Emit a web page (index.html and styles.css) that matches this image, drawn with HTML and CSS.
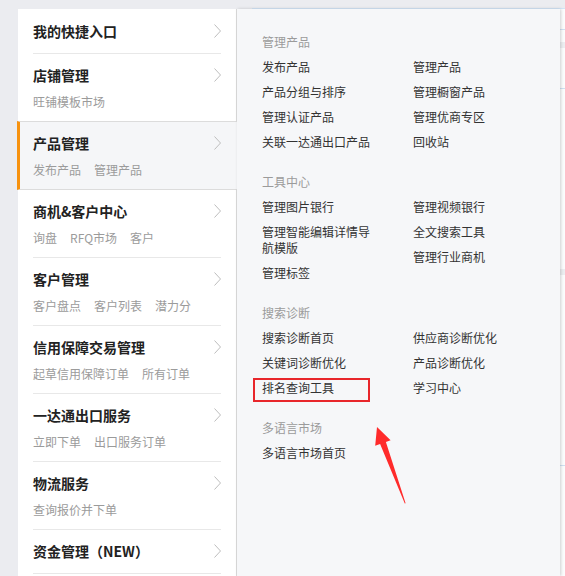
FILE: index.html
```html
<!DOCTYPE html>
<html lang="zh-CN">
<head>
<meta charset="utf-8">
<title>产品管理菜单</title>
<link rel="stylesheet" href="styles.css">
</head>
<body>
<div class="topbar"><div class="topline"></div></div>
<div class="main">
  <nav class="menu">
    <div class="item nosub">
      <div class="inner">
        <div class="title-row"><span class="title">我的快捷入口</span><svg class="chev" width="7" height="14" viewBox="0 0 7 14"><polyline points="0.5,0.5 6.5,7 0.5,13.5" fill="none" stroke="#bdbdbd" stroke-width="1"/></svg></div>
      </div>
    </div>
    <div class="item">
      <div class="inner">
        <div class="title-row"><span class="title">店铺管理</span><svg class="chev" width="7" height="14" viewBox="0 0 7 14"><polyline points="0.5,0.5 6.5,7 0.5,13.5" fill="none" stroke="#bdbdbd" stroke-width="1"/></svg></div>
        <div class="subs"><span>旺铺模板市场</span></div>
      </div>
    </div>
    <div class="item active">
      <div class="inner">
        <div class="title-row"><span class="title">产品管理</span><svg class="chev" width="7" height="14" viewBox="0 0 7 14"><polyline points="0.5,0.5 6.5,7 0.5,13.5" fill="none" stroke="#bdbdbd" stroke-width="1"/></svg></div>
        <div class="subs"><span>发布产品</span><span>管理产品</span></div>
      </div>
    </div>
    <div class="item">
      <div class="inner">
        <div class="title-row"><span class="title">商机&amp;客户中心</span><svg class="chev" width="7" height="14" viewBox="0 0 7 14"><polyline points="0.5,0.5 6.5,7 0.5,13.5" fill="none" stroke="#bdbdbd" stroke-width="1"/></svg></div>
        <div class="subs"><span>询盘</span><span>RFQ市场</span><span>客户</span></div>
      </div>
    </div>
    <div class="item">
      <div class="inner">
        <div class="title-row"><span class="title">客户管理</span><svg class="chev" width="7" height="14" viewBox="0 0 7 14"><polyline points="0.5,0.5 6.5,7 0.5,13.5" fill="none" stroke="#bdbdbd" stroke-width="1"/></svg></div>
        <div class="subs"><span>客户盘点</span><span>客户列表</span><span>潜力分</span></div>
      </div>
    </div>
    <div class="item">
      <div class="inner">
        <div class="title-row"><span class="title">信用保障交易管理</span><svg class="chev" width="7" height="14" viewBox="0 0 7 14"><polyline points="0.5,0.5 6.5,7 0.5,13.5" fill="none" stroke="#bdbdbd" stroke-width="1"/></svg></div>
        <div class="subs"><span>起草信用保障订单</span><span>所有订单</span></div>
      </div>
    </div>
    <div class="item">
      <div class="inner">
        <div class="title-row"><span class="title">一达通出口服务</span><svg class="chev" width="7" height="14" viewBox="0 0 7 14"><polyline points="0.5,0.5 6.5,7 0.5,13.5" fill="none" stroke="#bdbdbd" stroke-width="1"/></svg></div>
        <div class="subs"><span>立即下单</span><span>出口服务订单</span></div>
      </div>
    </div>
    <div class="item">
      <div class="inner">
        <div class="title-row"><span class="title">物流服务</span><svg class="chev" width="7" height="14" viewBox="0 0 7 14"><polyline points="0.5,0.5 6.5,7 0.5,13.5" fill="none" stroke="#bdbdbd" stroke-width="1"/></svg></div>
        <div class="subs"><span>查询报价并下单</span></div>
      </div>
    </div>
    <div class="item nosub last">
      <div class="inner">
        <div class="title-row"><span class="title">资金管理（NEW）</span><svg class="chev" width="7" height="14" viewBox="0 0 7 14"><polyline points="0.5,0.5 6.5,7 0.5,13.5" fill="none" stroke="#bdbdbd" stroke-width="1"/></svg></div>
      </div>
    </div>
  </nav>

  <section class="flyout">
    <div class="group">
      <div class="heading">管理产品</div>
      <div class="cols">
        <div class="col"><a>发布产品</a><a>产品分组与排序</a><a>管理认证产品</a><a>关联一达通出口产品</a></div>
        <div class="col"><a>管理产品</a><a>管理橱窗产品</a><a>管理优商专区</a><a>回收站</a></div>
      </div>
    </div>
    <div class="group">
      <div class="heading">工具中心</div>
      <div class="cols">
        <div class="col"><a>管理图片银行</a><a>管理智能编辑详情导航模版</a><a>管理标签</a></div>
        <div class="col"><a>管理视频银行</a><a>全文搜索工具</a><a>管理行业商机</a></div>
      </div>
    </div>
    <div class="group">
      <div class="heading">搜索诊断</div>
      <div class="cols">
        <div class="col"><a>搜索诊断首页</a><a>关键词诊断优化</a><a>排名查询工具</a></div>
        <div class="col"><a>供应商诊断优化</a><a>产品诊断优化</a><a>学习中心</a></div>
      </div>
    </div>
    <div class="group">
      <div class="heading">多语言市场</div>
      <div class="cols">
        <div class="col"><a>多语言市场首页</a></div>
        <div class="col"></div>
      </div>
    </div>

    <div class="mark-box"></div>
    <svg class="mark-arrow" width="40" height="90" viewBox="0 0 40 90">
      <polygon points="7,7 20.6,20.2 15.9,22 35.6,83.2 34.8,83.6 10.1,24 5.2,25.8" fill="#ff2b2b"/>
    </svg>
  </section>

  <div class="behind">
    <div class="b-line b1"></div>
    <div class="b-gray b2"></div>
    <div class="b-line b3"></div>
    <div class="b-gray b4"></div>
    <div class="b-line b5"></div>
  </div>
</div>
</body>
</html>
```

FILE: styles.css
```css
html, body {
  margin: 0;
  padding: 0;
}
body {
  width: 565px;
  height: 576px;
  overflow: hidden;
  background: #ebecf0;
  font-family: "Noto Sans CJK SC", "Noto Sans", sans-serif;
  color: #333;
}
.topbar {
  height: 9px;
  padding-top: 8px;
  padding-left: 252px;
  box-sizing: border-box;
}
.topline {
  height: 1px;
  background: #d3e5f7;
}
.main {
  display: flex;
  height: 567px;
}

/* left menu */
.menu {
  margin-left: 18px;
  width: 218px;
  background: #fff;
  border-right: 1px solid #dcdcdc;
  flex: none;
}
.item {
  padding: 0 15px;
}
.item .inner {
  border-bottom: 1px solid #e8e8e8;
  padding: 12px 0 12px;
}
.item.nosub .inner {
  padding-bottom: 13px;
}
.item:first-child .inner {
  padding-top: 13px;
}
.title-row {
  display: flex;
  justify-content: space-between;
  align-items: center;
  height: 18px;
}
.title {
  font-size: 14px;
  font-weight: 700;
  line-height: 18px;
  color: #222;
}
.chev {
  display: block;
}
.subs {
  display: flex;
  gap: 13px;
  margin-top: 10px;
  font-size: 12px;
  line-height: 15px;
  color: #9b9b9b;
}
.item.active {
  margin: -1px -1px 0 -1px;
  padding: 0 16px 0 13px;
  background: #f5f6f8;
  border-left: 3px solid #f7920f;
  border-top: 1px solid #dcdcdc;
  border-bottom: 1px solid #dcdcdc;
  position: relative;
}
.item.active .inner {
  border-bottom: none;
}
.item.last .inner {
  padding-top: 12px;
}

/* flyout */
.flyout {
  position: relative;
  width: 298px;
  padding: 25px 0 0 25px;
  background: #f6f7f9;
  box-shadow: 1px 0 3px rgba(0, 0, 0, 0.18);
  flex: none;
  font-size: 12px;
  z-index: 2;
}
.group {
  margin-bottom: 15px;
}
.heading {
  line-height: 16px;
  margin-bottom: 9px;
  color: #9b9b9b;
}
.cols {
  display: grid;
  grid-template-columns: 151px 1fr;
}
.col {
  display: flex;
  flex-direction: column;
  align-items: flex-start;
}
.col a {
  display: block;
  max-width: 112px;
  line-height: 16px;
  margin-bottom: 9px;
  color: #333;
}
.mark-box {
  position: absolute;
  left: 16px;
  top: 369px;
  width: 117px;
  height: 24px;
  box-sizing: border-box;
  border: 2px solid #e8262b;
}
.mark-arrow {
  position: absolute;
  left: 133px;
  top: 411px;
}

/* page content behind the flyout */
.behind {
  flex: 1;
  background: #fbfcfd;
  display: flex;
  flex-direction: column;
}
.b-line {
  height: 1px;
  background: #cfe0f2;
}
.b-gray {
  height: 6px;
  background: #eceef1;
}
.b1 { margin-top: 20px; }
.b2 { margin-top: 12px; }
.b3 { margin-top: 40px; }
.b4 { margin-top: 180px; }
.b5 { margin-top: 190px; }
```
